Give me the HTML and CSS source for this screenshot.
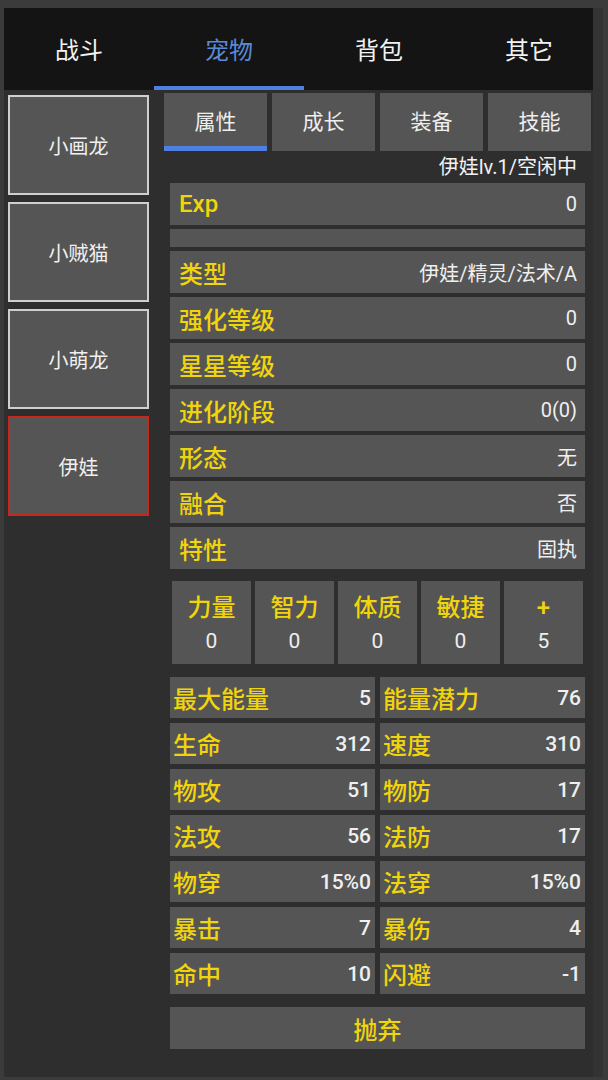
FILE: index.html
```html
<!DOCTYPE html>
<html lang="zh">
<head>
<meta charset="utf-8">
<title>宠物</title>
<link rel="stylesheet" href="styles.css">
</head>
<body>
<div class="frame">
  <div class="topbar">
    <div class="tab">战斗</div>
    <div class="tab active">宠物</div>
    <div class="tab">背包</div>
    <div class="tab">其它</div>
  </div>
  <div class="main">
    <div class="petlist">
      <div class="pet">小画龙</div>
      <div class="pet">小贼猫</div>
      <div class="pet">小萌龙</div>
      <div class="pet selected">伊娃</div>
    </div>
    <div class="detail">
      <div class="subtabs">
        <div class="subtab active">属性</div>
        <div class="subtab">成长</div>
        <div class="subtab">装备</div>
        <div class="subtab">技能</div>
      </div>
      <div class="status">伊娃lv.1/空闲中</div>
      <div class="rows">
        <div class="row"><span class="lbl">Exp</span><span class="val">0</span></div>
        <div class="row empty"></div>
        <div class="row"><span class="lbl">类型</span><span class="val">伊娃/精灵/法术/A</span></div>
        <div class="row"><span class="lbl">强化等级</span><span class="val">0</span></div>
        <div class="row"><span class="lbl">星星等级</span><span class="val">0</span></div>
        <div class="row"><span class="lbl">进化阶段</span><span class="val">0(0)</span></div>
        <div class="row"><span class="lbl">形态</span><span class="val">无</span></div>
        <div class="row"><span class="lbl">融合</span><span class="val">否</span></div>
        <div class="row"><span class="lbl">特性</span><span class="val">固执</span></div>
      </div>
      <div class="attrs">
        <div class="attr"><span class="alabel">力量</span><span class="aval">0</span></div>
        <div class="attr"><span class="alabel">智力</span><span class="aval">0</span></div>
        <div class="attr"><span class="alabel">体质</span><span class="aval">0</span></div>
        <div class="attr"><span class="alabel">敏捷</span><span class="aval">0</span></div>
        <div class="attr"><span class="alabel">+</span><span class="aval">5</span></div>
      </div>
      <div class="stats">
        <div class="cell"><span class="lbl2">最大能量</span><span class="val2">5</span></div>
        <div class="cell"><span class="lbl2">能量潜力</span><span class="val2">76</span></div>
        <div class="cell"><span class="lbl2">生命</span><span class="val2">312</span></div>
        <div class="cell"><span class="lbl2">速度</span><span class="val2">310</span></div>
        <div class="cell"><span class="lbl2">物攻</span><span class="val2">51</span></div>
        <div class="cell"><span class="lbl2">物防</span><span class="val2">17</span></div>
        <div class="cell"><span class="lbl2">法攻</span><span class="val2">56</span></div>
        <div class="cell"><span class="lbl2">法防</span><span class="val2">17</span></div>
        <div class="cell"><span class="lbl2">物穿</span><span class="val2">15%0</span></div>
        <div class="cell"><span class="lbl2">法穿</span><span class="val2">15%0</span></div>
        <div class="cell"><span class="lbl2">暴击</span><span class="val2">7</span></div>
        <div class="cell"><span class="lbl2">暴伤</span><span class="val2">4</span></div>
        <div class="cell"><span class="lbl2">命中</span><span class="val2">10</span></div>
        <div class="cell"><span class="lbl2">闪避</span><span class="val2">-1</span></div>
      </div>
      <div class="discard">抛弃</div>
    </div>
  </div>
</div>
</body>
</html>
```
FILE: styles.css
```css
* { box-sizing: border-box; }
html, body { margin: 0; }
body {
  width: 608px;
  height: 1080px;
  background: #3b3b3b;
  padding: 8px 5px 3px 4px;
  font-family: Roboto, "Noto Sans CJK SC", "Noto Sans", sans-serif;
  color: #efefef;
  overflow: hidden;
}
.frame {
  width: 599px;
  height: 1069px;
  background: #2e2e2e;
  border-right: 10px solid #333333;
  overflow: hidden;
}
.topbar {
  height: 82px;
  background: #141414;
  display: flex;
  overflow: hidden;
}
.tab {
  flex: 0 0 150px;
  height: 82px;
  display: flex;
  align-items: center;
  justify-content: center;
  font-size: 24px;
  color: #f2f2f2;
  padding-top: 3px;
  border-bottom: 4px solid transparent;
}
.tab.active {
  color: #5a8ad8;
  border-bottom-color: #4f80e0;
}
.main {
  display: flex;
}
.petlist {
  width: 160px;
  padding: 5px 0 0 4px;
  display: flex;
  flex-direction: column;
  gap: 7px;
}
.pet {
  width: 141px;
  height: 100px;
  background: #555555;
  border: 2px solid #cfcfcf;
  display: flex;
  align-items: center;
  justify-content: center;
  font-size: 20px;
  color: #f0f0f0;
}
.pet.selected {
  border-color: #c8281c;
}
.detail {
  width: 427px;
  padding-top: 3px;
}
.subtabs {
  display: grid;
  grid-template-columns: repeat(4, 1fr);
  gap: 5px;
}
.subtab {
  height: 58px;
  background: #555555;
  display: flex;
  align-items: center;
  justify-content: center;
  font-size: 21px;
  color: #eeeeee;
  border-bottom: 5px solid transparent;
  padding-top: 1px;
}
.subtab.active {
  border-bottom-color: #4f80e0;
}
.status {
  height: 32px;
  line-height: 32px;
  text-align: right;
  padding-right: 14px;
  font-size: 20px;
  color: #f2f2f2;
}
.rows {
  padding: 0 6px;
  display: flex;
  flex-direction: column;
  gap: 4px;
}
.row {
  height: 42px;
  background: #555555;
  display: flex;
  align-items: center;
  justify-content: space-between;
  padding: 0 8px 0 9px;
}
.row.empty {
  height: 18px;
}
.lbl, .lbl2, .alabel {
  color: #f0d40c;
  font-size: 24px;
  font-weight: 500;
}
.val {
  font-size: 20px;
  color: #efefef;
}
.attrs {
  margin: 12px 8px 0 8px;
  display: grid;
  grid-template-columns: repeat(5, 1fr);
  gap: 4px;
}
.attr {
  height: 83px;
  background: #555555;
  display: flex;
  flex-direction: column;
  align-items: center;
  padding-top: 12px;
}
.alabel {
  line-height: 30px;
}
.aval {
  font-size: 21px;
  line-height: 36px;
  color: #efefef;
}
.stats {
  margin: 13px 6px 0 6px;
  display: grid;
  grid-template-columns: 1fr 1fr;
  column-gap: 5px;
  row-gap: 5px;
}
.cell {
  height: 41px;
  background: #555555;
  display: flex;
  align-items: center;
  justify-content: space-between;
  padding: 0 4px 0 3px;
}
.val2 {
  font-size: 21px;
  font-weight: 500;
  color: #efefef;
}
.discard {
  margin: 13px 6px 0 6px;
  height: 42px;
  background: #555555;
  display: flex;
  align-items: center;
  justify-content: center;
  color: #f0d40c;
  font-size: 24px;
  font-weight: 500;
}
```
